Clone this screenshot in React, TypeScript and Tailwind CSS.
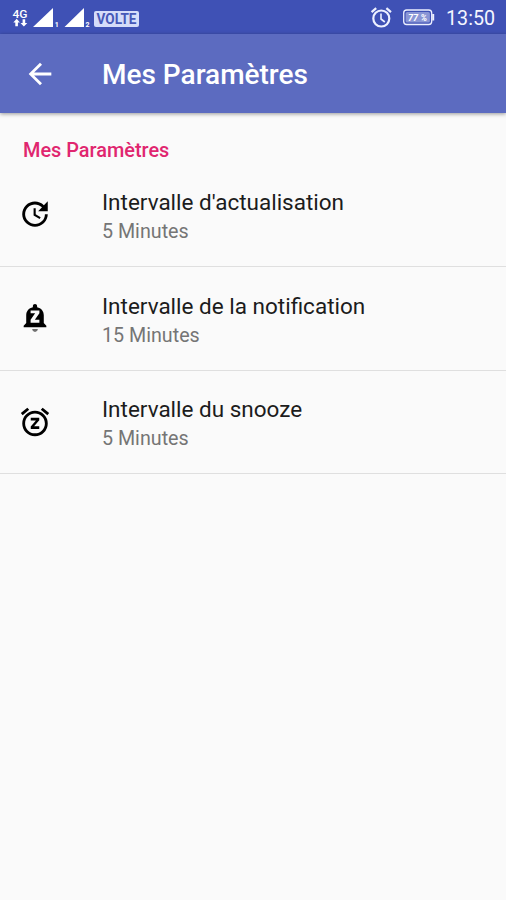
import React from "react";
import { MdArrowBack, MdSnooze, MdUpdate } from "react-icons/md";

function BellPaused() {
  return (
    <svg viewBox="0 0 24 24" className="size-[34px]" fill="currentColor">
      <path d="M12 21.8c1.1 0 2-.9 2-2h-4c0 1.1.9 2 2 2z" opacity=".55" />
      <path fillRule="evenodd" d="M18.200 15.500v-5.500c0-2.900-1.800-4.940-4.700-5.620V3.700c0-.83-.67-1.500-1.500-1.500s-1.500.67-1.500 1.500v.68C7.600 5.060 5.800 7.100 5.800 10v5.500L4 17.500v1h16v-1l-1.800-2zM15.100 8.700l-3.200 4.600h3.200v2H8.900v-2l3.200-4.600H8.900v-2h6.200v2z" />
    </svg>
  );
}

function StatusBar() {
  return (
    <div className="flex h-[34px] shrink-0 items-center bg-[#3f51b5]">
      <svg className="h-[34px] w-[146px]" viewBox="0 0 146 34" fill="#fff">
        <text x="12.5" y="17.5" fontSize="11" fontWeight="500" textLength="15" lengthAdjust="spacingAndGlyphs" fontFamily="Roboto, sans-serif">4G</text>
        <path d="M16.7 18.8l3.2 3.6h-2v3.8h-2.6v-3.8h-2zM23.9 26.6l-3.4-3.7h2.1v-3.7h2.6v3.7h2.1z" />
        <path d="M33 27L53 8v19zM64.5 27L84 8v19z" />
        <text x="54.8" y="27" fontSize="7" fontWeight="700" fontFamily="Roboto, sans-serif">1</text>
        <text x="85.5" y="27" fontSize="7" fontWeight="700" fontFamily="Roboto, sans-serif">2</text>
        <rect x="94" y="11" width="45" height="16" rx="2" fill="#d5dcfa" />
        <text x="96.5" y="24" fontSize="14.5" fontWeight="700" fill="#4658b8" textLength="40" lengthAdjust="spacingAndGlyphs" fontFamily="Roboto, sans-serif">VOLTE</text>
      </svg>
      <svg className="ml-auto h-[34px] w-[72px]" viewBox="366 0 72 34" fill="none" stroke="#edf0ff">
        <circle cx="381.3" cy="18.5" r="8" strokeWidth="2.2" />
        <path d="M371.6 12.2l4.6-4M391 12.2l-4.6-4" strokeWidth="2.2" />
        <path d="M381 13.5v5.5l3.8 3" strokeWidth="1.6" />
        <rect x="403.7" y="10" width="28" height="14.5" rx="3" strokeWidth="1.3" />
        <path d="M433.2 14v6.5" strokeWidth="2" />
        <rect x="405.6" y="12" width="24.3" height="10.5" rx="1.5" fill="#8995d5" stroke="none" />
        <text x="408" y="20.8" fontSize="9.5" fontStyle="italic" fontWeight="700" fill="#fff" stroke="none" textLength="19" lengthAdjust="spacingAndGlyphs" fontFamily="Roboto, sans-serif">77 %</text>
      </svg>
      <span className="ml-2 w-[60px] pt-[3px] text-[19.7px] leading-6 text-[#f4f6ff]">13:50</span>
    </div>
  );
}

const settings = [
  { title: "Intervalle d'actualisation", value: "5 Minutes", icon: <MdUpdate className="size-[34px]" /> },
  { title: "Intervalle de la notification", value: "15 Minutes", icon: <BellPaused /> },
  { title: "Intervalle du snooze", value: "5 Minutes", icon: <MdSnooze className="size-[34px]" /> },
];

export default function App() {
  return (
    <div className="flex h-[900px] w-[506px] flex-col overflow-hidden bg-[#fafafa] font-['Roboto',sans-serif]">
      <StatusBar />
      <header className="flex h-[79px] shrink-0 items-center bg-[#5c6bc0] pl-[23px] text-white shadow-[0_1px_4px_rgba(0,0,0,0.4)]">
        <MdArrowBack className="size-[34px]" />
        <h1 className="ml-[45px] pt-[3px] text-[28px] font-medium leading-8">Mes Paramètres</h1>
      </header>
      <h2 className="mt-[26px] pl-[23px] text-[19.9px] font-medium leading-6 text-[#e0266f]">Mes Paramètres</h2>
      <ul className="mt-[0.4px]">
        {settings.map((s) => (
          <li key={s.title} className="flex h-[103.6px] border-b border-[#dfdfdf] pl-[17.6px] pt-[34px] text-black">
            <div className="size-[34px]">{s.icon}</div>
            <div className="-mt-[10.4px] ml-[50.4px]">
              <div className="text-[22.5px] leading-[30px] text-[#1c1c1c]">{s.title}</div>
              <div className="mt-0.5 text-[19.7px] leading-[26px] text-[#757575]">{s.value}</div>
            </div>
          </li>
        ))}
      </ul>
    </div>
  );
}
